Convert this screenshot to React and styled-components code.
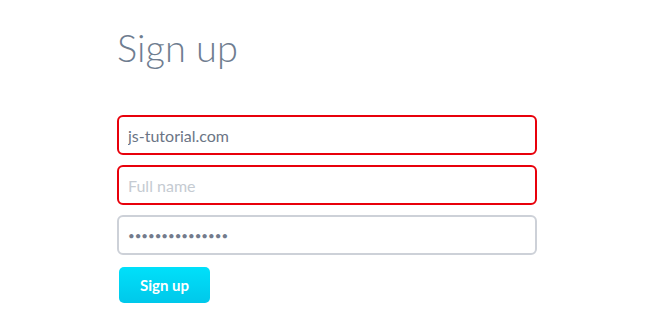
import styled, { createGlobalStyle } from "styled-components";

const GlobalStyle = createGlobalStyle`
body {
    margin: 0;
    background: #ffffff;
    font-family: 'Lato', 'Open Sans', sans-serif;
}
`

export default function App() {

    return (
        <>
            <GlobalStyle />
            <Page>
                <Title>Sign up</Title>

                <Form onSubmit={(e) => e.preventDefault()}>
                    <Field type="text" defaultValue="js-tutorial.com" $invalid />
                    <Field type="text" placeholder="Full name" $invalid />
                    <Field type="password" defaultValue="passwordpasswor" />

                    <SubmitButton type="submit">Sign up</SubmitButton>
                </Form>
            </Page>
        </>
    )
}

const Page = styled.div`
display: flex;
flex-direction: column;
padding: 24px 0 0 117px;
width: 420px;
`

const Title = styled.h1`
margin: 0;
font-family: 'Lato', sans-serif;
font-weight: 300;
font-size: 38px;
line-height: 46px;
color: #6f7d90;
`

const Form = styled.form`
display: flex;
flex-direction: column;
gap: 10px;
margin-top: 45px;
`

const Field = styled.input`
box-sizing: border-box;
width: 420px;
height: 40px;
padding: 0 9px;
border: 2px solid ${(props) => (props.$invalid ? "#e8000b" : "#cdd1d8")};
border-radius: 6px;
outline: none;
font-family: 'Lato', sans-serif;
font-size: 16px;
color: #6b7585;
background: #ffffff;

&[type="password"] {
    font-size: 11.5px;
    color: #737b8c;
}

&::placeholder {
    color: #c5cbd2;
}
`

const SubmitButton = styled.button`
align-self: flex-start;
margin: 2px 0 0 2px;
width: 91px;
height: 36px;
border: none;
border-radius: 5px;
background: linear-gradient(#00e0fa, #00c8ea);
color: #ffffff;
font-family: 'Lato', sans-serif;
font-weight: 700;
font-size: 15px;
cursor: pointer;
`
